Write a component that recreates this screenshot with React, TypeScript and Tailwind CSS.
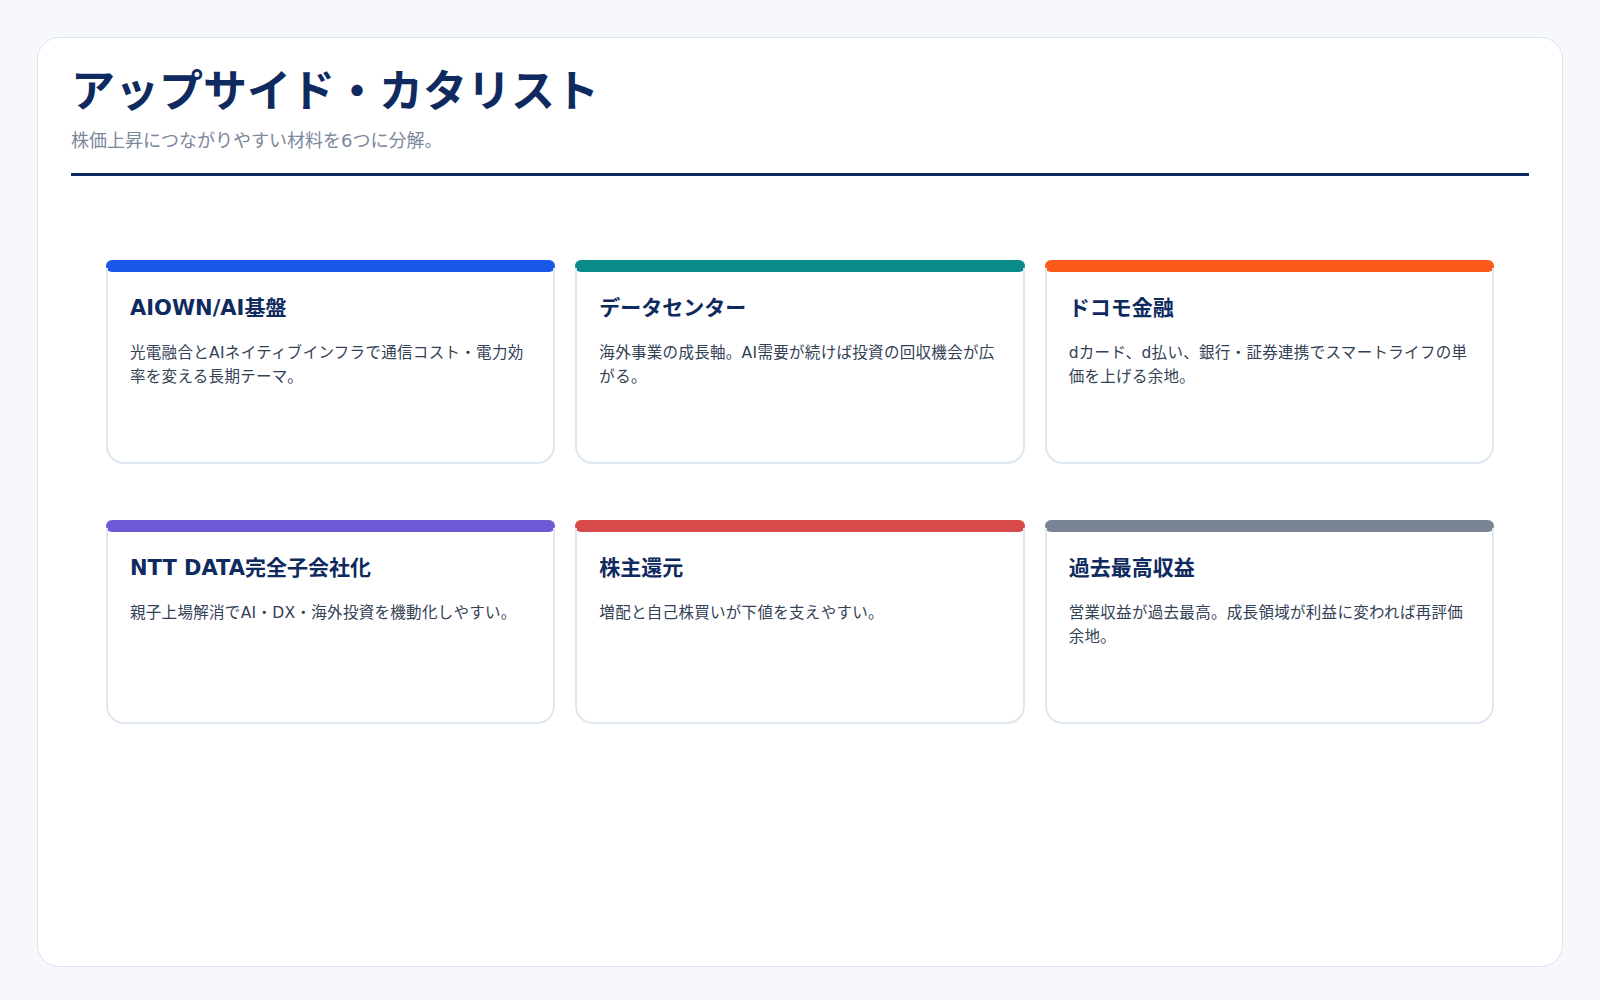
const cards = [
  { c: "#1a56e8", t: "AIOWN/AI基盤", d: "光電融合とAIネイティブインフラで通信コスト・電力効率を変える長期テーマ。" },
  { c: "#0b8a8a", t: "データセンター", d: "海外事業の成長軸。AI需要が続けば投資の回収機会が広がる。" },
  { c: "#fb5a1a", t: "ドコモ金融", d: "dカード、d払い、銀行・証券連携でスマートライフの単価を上げる余地。" },
  { c: "#6e5ad6", t: "NTT DATA完全子会社化", d: "親子上場解消でAI・DX・海外投資を機動化しやすい。" },
  { c: "#d94a4a", t: "株主還元", d: "増配と自己株買いが下値を支えやすい。" },
  { c: "#7a8494", t: "過去最高収益", d: "営業収益が過去最高。成長領域が利益に変われば再評価余地。" },
];

export default function App() {
  return (
    <div className="min-h-[1000px] w-[1600px] bg-[#f6f8fb] p-[37px] pb-[35px]" style={{ fontFamily: '"DejaVu Sans", "Noto Sans CJK JP", sans-serif' }}>
      <div className="h-[930px] rounded-[22px] border border-[#dbe4f0] bg-white px-[33px] pt-[26px]">
        <h1 className="text-[44px] font-bold leading-[56px] text-[#0f2a5e]">アップサイド・カタリスト</h1>
        <p className="mt-[8px] text-[18px] leading-[26px] text-[#7b879b]">株価上昇につながりやすい材料を6つに分解。</p>
        <div className="mt-[19px] h-[3px] bg-[#0f2a5e]" />
        <div className="mx-[35px] mt-[84px] grid grid-cols-3 gap-x-[20px] gap-y-[56px]">
          {cards.map((k) => (
            <div key={k.t} className="flex h-[204px] flex-col">
              <div className="h-[12px] rounded-[6px]" style={{ backgroundColor: k.c }} />
              <div className="-mt-[4px] flex-1 rounded-b-[18px] border-2 border-t-0 border-[#dfe7f2] px-[22px] pt-[26px]">
                <h2 className="text-[21px] font-bold leading-[28px] text-[#0f2a5e]">{k.t}</h2>
                <p className="mt-[19px] text-[15.5px] leading-[24px] tracking-[0.02em] text-[#334155]">{k.d}</p>
              </div>
            </div>
          ))}
        </div>
      </div>
    </div>
  );
}
